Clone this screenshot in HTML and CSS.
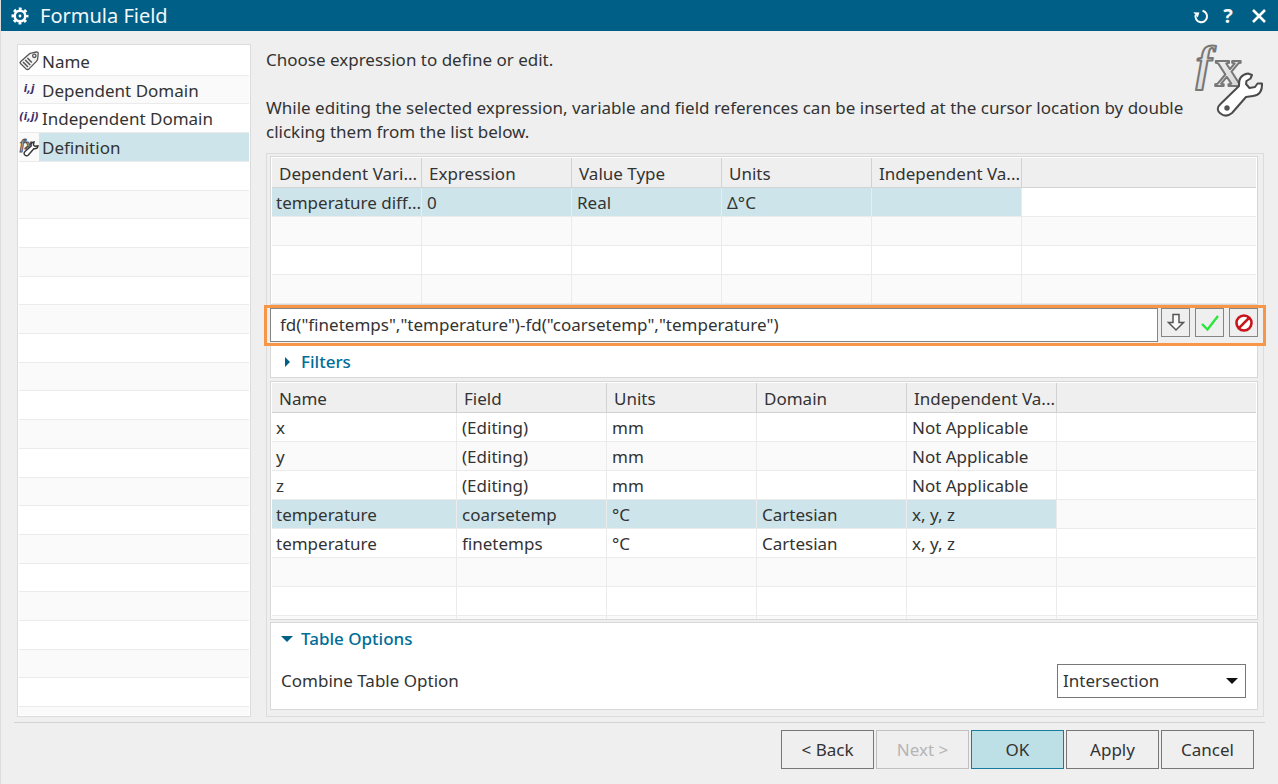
FILE: index.html
```html
<!DOCTYPE html>
<html lang="en">
<head>
<meta charset="utf-8">
<title>Formula Field</title>
<link rel="stylesheet" href="styles.css">
</head>
<body>
<header class="titlebar">
  <svg class="gear" viewBox="0 0 18 18" width="18" height="18" aria-hidden="true">
    <circle cx="9" cy="9" r="7" fill="none" stroke="#fff" stroke-width="3" stroke-dasharray="2.75 2.75" stroke-dashoffset="1.4"/>
    <circle cx="9" cy="9" r="5.3" fill="none" stroke="#fff" stroke-width="2.6"/>
    <circle cx="9" cy="9" r="1.4" fill="#fff"/>
  </svg>
  <h1 class="title">Formula Field</h1>
  <button class="tool" type="button" aria-label="Reset">
    <svg viewBox="0 0 16 16" width="16" height="16"><path d="M9.500 2.700A5.800 5.800 0 1 1 2.600 7" fill="none" stroke="#fff" stroke-width="2"/><path d="M.4 4.200L6.400 4.600L4.800 9.400z" fill="#fff"/></svg>
  </button>
  <button class="tool help" type="button" aria-label="Help"><span class="question">?</span></button>
  <button class="tool close" type="button" aria-label="Close">
    <svg viewBox="0 0 16 16" width="16" height="16"><path d="M2 2l12 12M14 2L2 14" stroke="#fff" stroke-width="2.6"/></svg>
  </button>
</header>

<div class="content">
  <nav class="steps">
    <a class="step" href="#name"><span class="step-icon">
      <svg viewBox="0 0 20 20" width="20" height="20"><g fill="#f4f4f4" stroke="#555" stroke-width="1.3" stroke-linejoin="round"><path d="M1.5 10.800L9.6 3.500Q11 2 13 1.800L17.500 1Q19.2.8 19.200 2.500L18.800 7Q18.800 9 17.400 10.400L10 17.900Q8.500 19.200 7 17.900L1.500 12.500Q.7 11.600 1.500 10.800z"/><circle cx="15.300" cy="4.800" r="1.700"/></g><path d="M4 11l5 5M6.200 9l5 5M8.400 7l4.400 4.600" stroke="#555" stroke-width="1.500"/></svg></span><span class="step-label">Name</span></a>
    <a class="step" href="#dependent"><span class="step-icon"><svg viewBox="0 0 20 20" width="20" height="20"><text x="10" y="12" text-anchor="middle" class="index">i,j</text></svg></span><span class="step-label">Dependent Domain</span></a>
    <a class="step" href="#independent"><span class="step-icon"><svg viewBox="0 0 20 20" width="20" height="20"><text x="10" y="12" text-anchor="middle" class="index">(i,j)</text></svg></span><span class="step-label">Independent Domain</span></a>
    <a class="step current" href="#definition" aria-current="step"><span class="step-icon">
      <svg viewBox="0 0 20 20" width="20" height="20"><text x="1" y="12" class="fx-small">fx</text><path d="M6 14.500L12.200 9Q11.400 5.800 15 5L14.400 8L16 9.300L19 8.800Q18.600 12 14.800 11.700L9.400 18Q7.600 19.500 5.900 18T6 14.500z" fill="#fff" stroke="#333" stroke-width="1.400"/></svg></span><span class="step-label">Definition</span></a>
    <div class="step"></div><div class="step"></div><div class="step"></div><div class="step"></div><div class="step"></div>
    <div class="step"></div><div class="step"></div><div class="step"></div><div class="step"></div><div class="step"></div>
    <div class="step"></div><div class="step"></div><div class="step"></div><div class="step"></div><div class="step"></div>
    <div class="step"></div><div class="step"></div><div class="step"></div><div class="step"></div>
    <div class="step last"></div>
  </nav>

  <main class="main">
    <div class="intro">
      <div class="intro-text">
        <p>Choose expression to define or edit.</p>
        <p>While editing the selected expression, variable and field references can be inserted at the cursor location by double clicking them from the list below.</p>
      </div>
      <svg class="fx-wrench" viewBox="0 0 74 72" width="74" height="72" aria-hidden="true">
        <defs><linearGradient id="steel" x2="1" y2="1"><stop offset="0" stop-color="#f8f8f8"/><stop offset="1" stop-color="#cfcfcf"/></linearGradient></defs>
        <text x="6" y="34" class="fx-f">f</text>
        <text x="25" y="40" class="fx-x">x</text>
        <path d="M30.500 58L49 40Q48 29 58 27.500L62 29L60.500 32.500L56.500 35L56 38L59.500 42L65 41L67.500 37.500L72 37.500Q72.500 49 63 50L56 51L42 67Q36 72 30.500 67.500T30.500 58z" fill="#fff" stroke="#4b4b4b" stroke-width="2" stroke-linejoin="round"/>
        <circle cx="37" cy="62" r="2.700" fill="#555"/>
      </svg>
    </div>

    <section class="group">
      <div class="grid-panel top-grid">
        <table class="grid">
          <colgroup><col class="c150"><col class="c150"><col class="c150"><col class="c150"><col class="c150"><col></colgroup>
          <thead><tr><th>Dependent Vari...</th><th>Expression</th><th>Value Type</th><th>Units</th><th>Independent Va...</th><th></th></tr></thead>
          <tbody>
            <tr class="selected"><td>temperature diff...</td><td>0</td><td>Real</td><td>Δ°C</td><td></td><td></td></tr>
            <tr><td></td><td></td><td></td><td></td><td></td><td></td></tr>
            <tr><td></td><td></td><td></td><td></td><td></td><td></td></tr>
            <tr><td></td><td></td><td></td><td></td><td></td><td></td></tr>
            <tr><td></td><td></td><td></td><td></td><td></td><td></td></tr>
          </tbody>
        </table>
      </div>

      <form class="formula">
        <input class="formula-input" type="text" aria-label="Formula" value="fd(&quot;finetemps&quot;,&quot;temperature&quot;)-fd(&quot;coarsetemp&quot;,&quot;temperature&quot;)">
        <button class="square" type="button" aria-label="Insert"><svg viewBox="0 0 20 20" width="20" height="20"><path d="M7 1.500H13V9.500H17.500L10 17L2.500 9.500H7z" fill="#fafafa" stroke="#555" stroke-width="1.500"/></svg></button>
        <button class="square" type="button" aria-label="Accept"><svg viewBox="0 0 20 20" width="20" height="20"><path d="M2 11L7.500 16.500L18 3" fill="none" stroke="#2be53c" stroke-width="2.400"/></svg></button>
        <button class="square" type="button" aria-label="Reject"><svg viewBox="0 0 20 20" width="20" height="20"><circle cx="10" cy="10" r="7.500" fill="#fff" stroke="#c8141c" stroke-width="2.600"/><path d="M4.700 15.300L15.300 4.700" stroke="#c8141c" stroke-width="2.600"/></svg></button>
      </form>

      <div class="panel filters">
        <button class="fold" type="button" aria-expanded="false"><svg viewBox="0 0 12 12" width="12" height="12"><path d="M4 1v10l5-5z" fill="#005f87"/></svg>Filters</button>
      </div>

      <div class="grid-panel field-grid">
        <table class="grid">
          <colgroup><col class="c185"><col class="c150"><col class="c150"><col class="c150"><col class="c150"><col></colgroup>
          <thead><tr><th>Name</th><th>Field</th><th>Units</th><th>Domain</th><th>Independent Va...</th><th></th></tr></thead>
          <tbody>
            <tr><td>x</td><td>(Editing)</td><td>mm</td><td></td><td>Not Applicable</td><td></td></tr>
            <tr><td>y</td><td>(Editing)</td><td>mm</td><td></td><td>Not Applicable</td><td></td></tr>
            <tr><td>z</td><td>(Editing)</td><td>mm</td><td></td><td>Not Applicable</td><td></td></tr>
            <tr class="selected"><td>temperature</td><td>coarsetemp</td><td>°C</td><td>Cartesian</td><td>x, y, z</td><td></td></tr>
            <tr><td>temperature</td><td>finetemps</td><td>°C</td><td>Cartesian</td><td>x, y, z</td><td></td></tr>
            <tr><td></td><td></td><td></td><td></td><td></td><td></td></tr>
            <tr><td></td><td></td><td></td><td></td><td></td><td></td></tr>
            <tr><td></td><td></td><td></td><td></td><td></td><td></td></tr>
          </tbody>
        </table>
      </div>

      <div class="panel options">
        <button class="fold" type="button" aria-expanded="true"><svg viewBox="0 0 12 12" width="12" height="12"><path d="M0 3h12l-6 6z" fill="#005f87"/></svg>Table Options</button>
        <div class="option-row">
          <label for="combine">Combine Table Option</label>
          <span class="select-box">
            <select id="combine" class="select"><option>Intersection</option><option>Union</option></select>
            <svg class="arrow" viewBox="0 0 12 6" width="12" height="6"><path d="M0 0h12l-6 6z" fill="#111"/></svg>
          </span>
        </div>
      </div>
    </section>
  </main>
</div>

<footer class="footer">
  <button class="btn" type="button">&lt; Back</button>
  <button class="btn" type="button" disabled>Next &gt;</button>
  <button class="btn primary" type="button">OK</button>
  <button class="btn" type="button">Apply</button>
  <button class="btn" type="button">Cancel</button>
</footer>
</body>
</html>
```
FILE: styles.css
```css
* { box-sizing: border-box; }

body {
  margin: 0;
  min-height: 100vh;
  display: flex;
  flex-direction: column;
  background: #efefef;
  border-left: 1px solid #dcdcdc;
  color: #333;
  font: 17px/24px "Noto Sans", "Open Sans", sans-serif;
}

button, input, select { font: inherit; color: inherit; }
svg { display: block; flex: none; }

/* Title bar */
.titlebar {
  display: flex;
  align-items: center;
  height: 31px;
  margin-left: -1px;
  padding: 0 7px 0 11px;
  background: #005f87;
  color: #f4f8fa;
}
.title {
  flex: 1;
  margin: 0 0 0 11px;
  font-size: 20px;
  font-weight: 400;
  line-height: 31px;
}
.tool {
  display: flex;
  align-items: center;
  justify-content: center;
  width: 24px;
  height: 24px;
  padding: 0;
  border: 0;
  background: none;
}
.help { margin: 0 7px 0 3px; }
.question { font-size: 20px; font-weight: 700; line-height: 24px; }

/* Two columns */
.content {
  flex: 1;
  display: flex;
  gap: 15px;
  margin: 0 13px;
  padding: 13px 1px 5px 3px;
  border-bottom: 1px solid #d2d2d2;
}

/* Step list */
.steps {
  flex: none;
  display: flex;
  flex-direction: column;
  width: 234px;
  padding: 2px 1px 1px;
  border: 1px solid #dcdcdc;
  background: #fff;
}
.step {
  flex: 1;
  display: flex;
  align-items: center;
  border-bottom: 1px solid #ebebeb;
  color: inherit;
  text-decoration: none;
}
.step:nth-child(even) { background: #fafafa; }
.step-label { flex: 1; align-self: stretch; display: flex; align-items: center; padding: 2px 0 0 3px; }
.current .step-label { background: #cde5ea; }
.last { flex: none; height: 8px; border: 0; }
.index { font: italic 700 10px "DejaVu Sans", sans-serif; fill: #3d2d6b; }
.fx-small { font: italic 700 15px "Liberation Serif", serif; fill: #bbb; stroke: #555; stroke-width: 1px; }

/* Main column */
.main { flex: 1; min-width: 0; display: flex; flex-direction: column; }
.intro { display: flex; justify-content: space-between; min-height: 109px; padding-top: 4px; }
.intro-text { max-width: 922px; }
.intro p { margin: 0 0 24px; }
.intro p + p { margin: 0; }
.fx-wrench { overflow: visible; margin: -2px 0 0; }
.fx-f, .fx-x { fill: url(#steel); stroke: #777; stroke-width: 2px; stroke-linejoin: round; }
.fx-f { font: italic 700 48px "Liberation Serif", serif; }
.fx-x { font: 700 54px "Liberation Serif", serif; }

.group {
  flex: 1;
  display: flex;
  flex-direction: column;
  padding: 2px 5px 6px 3px;
  border: 1px solid #dcdcdc;
}
.grid-panel { overflow: hidden; padding: 1px; border: 1px solid #d8d8d8; background: #fff; }
.top-grid { height: 149px; }
.field-grid { flex: 1 0 239px; height: 239px; margin: 3px 0 2px; }
.panel { border: 1px solid #d8d8d8; background: #fff; }

/* Grids */
.grid { width: 100%; table-layout: fixed; border-collapse: separate; border-spacing: 0; }
.c150 { width: 150px; }
.c185 { width: 185px; }
.grid th, .grid td {
  height: 29px;
  padding: 2px 0 0 5px;
  border-right: 1px solid #ebebeb;
  border-bottom: 1px solid #ebebeb;
  text-align: left;
  white-space: nowrap;
  font-weight: 400;
}
.grid td:first-child { padding-left: 4px; }
.grid th { height: 30px; padding: 3px 0 0 7px; background: #efefef; border-color: #d2d2d2; }
.grid th:last-child, .grid td:last-child { border-right: 0; }
.grid tbody tr:nth-child(even) { background: #fafafa; }
.grid .selected td:not(:last-child) { background: #cde5ea; }

/* Formula row */
.formula {
  display: flex;
  gap: 5px;
  margin: 0 -8px 0 -6px;
  padding: 0 5px 1px 3px;
  border: 3px solid #f79646;
}
.formula-input {
  flex: 1;
  min-width: 0;
  height: 34px;
  margin-right: -2px;
  padding: 0 9px 2px;
  border: 1px solid #858585;
  background: #fff;
}
.square {
  display: flex;
  align-items: center;
  justify-content: center;
  width: 29px;
  height: 29px;
  padding: 0;
  border: 1px solid #858585;
  background: #efefef;
}

/* Foldable panels */
.filters { padding: 4px 10px 3px; border-top: 0; }
.fold {
  display: flex;
  align-items: center;
  gap: 8px;
  padding: 0;
  border: 0;
  background: none;
  color: #006d97;
  font-weight: 500;
}
.options { padding: 4px 11px 11px 10px; }
.option-row { display: flex; align-items: center; justify-content: space-between; margin-top: 13px; }
.select-box { display: grid; align-items: center; width: 189px; }
.select, .arrow { grid-area: 1 / 1; }
.select {
  appearance: none;
  width: 100%;
  height: 34px;
  padding: 0 5px;
  border: 1px solid #777;
  border-radius: 0;
  background: #fff;
}
.arrow { justify-self: end; margin-right: 8px; pointer-events: none; }

/* Footer */
.footer { display: flex; justify-content: flex-end; gap: 2px; padding: 7px 24px 15px; }
.btn { width: 93px; height: 39px; padding: 0; border: 1px solid #777; background: #efefef; }
.btn:disabled { border-color: #c0c0c0; color: #b5b5b5; }
.primary { border-color: #167d9f; background: #bddfe6; }
```
